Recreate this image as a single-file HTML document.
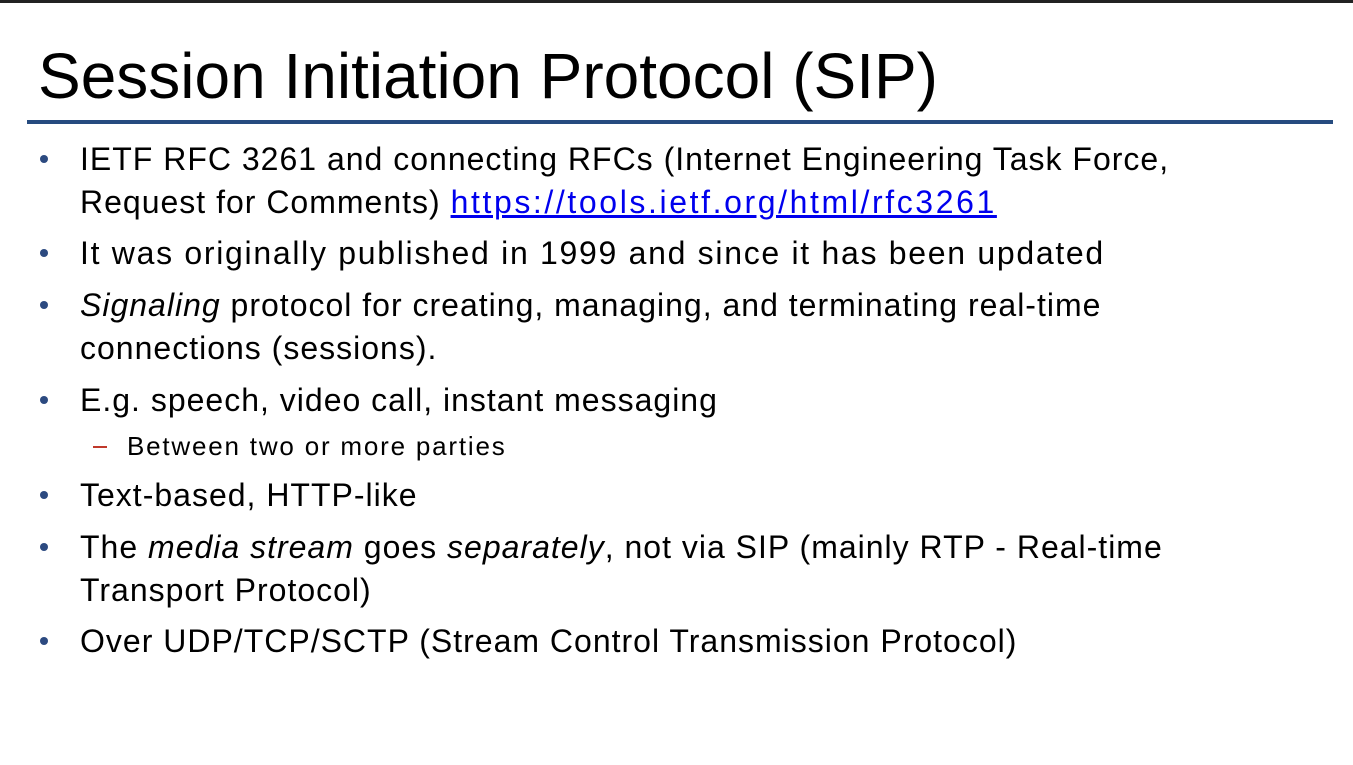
<!DOCTYPE html>
<html><head><meta charset="utf-8"><style>
body{margin:0;width:1353px;height:765px;background:#fff;position:relative;overflow:hidden;font-family:"Liberation Sans",sans-serif;color:#000}
.top{position:absolute;left:0;top:0;width:1353px;height:3px;background:#222}
.title{position:absolute;left:38px;font-size:64px;line-height:64px;white-space:nowrap}
.rule{position:absolute;left:27px;top:120px;width:1306px;height:4px;background:#264b7f}
.l{position:absolute;left:80px;font-size:32px;line-height:32px;letter-spacing:1px;white-space:nowrap}
.s{position:absolute;left:127px;font-size:26px;line-height:26px;letter-spacing:1.8px;white-space:nowrap}
.b{position:absolute;left:40px;width:8px;height:8px;border-radius:50%;background:#2c4a80}
.d{position:absolute;left:93px;width:14px;height:2px;background:#c0392b}
a{color:#0000ee;text-decoration:underline;letter-spacing:2.6px}
</style></head><body>
<div class="top"></div>
<div class="title" style="top:44px">Session Initiation Protocol (SIP)</div>
<div class="rule"></div>

<div class="b" style="top:155px"></div>
<div class="l" style="top:143px">IETF RFC 3261 and connecting RFCs (Internet Engineering Task Force,</div>
<div class="l" style="top:186px">Request for Comments) <a>https://tools.ietf.org/html/rfc3261</a></div>

<div class="b" style="top:249px"></div>
<div class="l" style="top:237px;letter-spacing:1.7px">It was originally published in 1999 and since it has been updated</div>

<div class="b" style="top:301px"></div>
<div class="l" style="top:289px"><i>Signaling</i> protocol for creating, managing, and terminating real-time</div>
<div class="l" style="top:332px">connections (sessions).</div>

<div class="b" style="top:396px"></div>
<div class="l" style="top:384px">E.g. speech, video call, instant messaging</div>
<div class="d" style="top:446px"></div>
<div class="s" style="top:433px">Between two or more parties</div>

<div class="b" style="top:491px"></div>
<div class="l" style="top:479px">Text-based, HTTP-like</div>

<div class="b" style="top:543px"></div>
<div class="l" style="top:531px">The <i>media stream</i> goes <i>separately</i>, not via SIP (mainly RTP - Real-time</div>
<div class="l" style="top:574px">Transport Protocol)</div>

<div class="b" style="top:637px"></div>
<div class="l" style="top:625px">Over UDP/TCP/SCTP (Stream Control Transmission Protocol)</div>
</body></html>
